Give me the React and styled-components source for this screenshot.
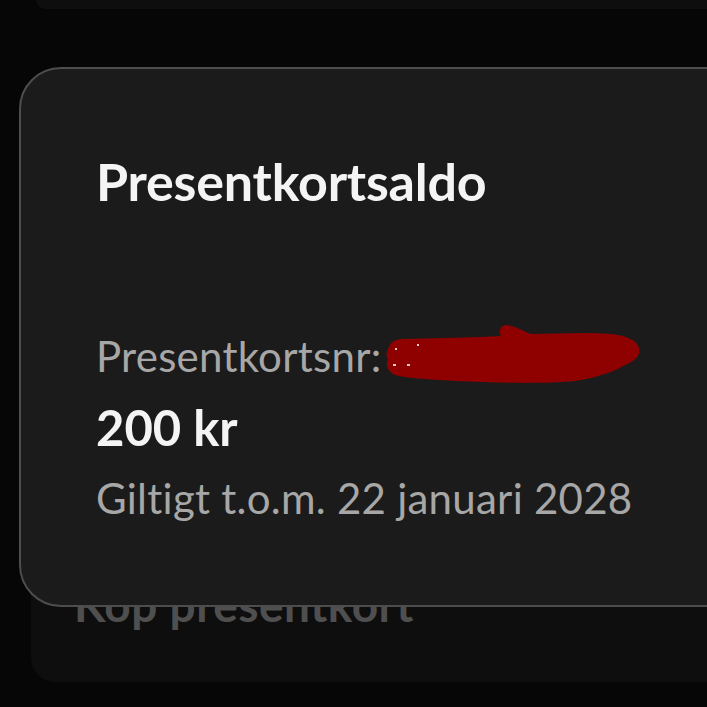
import React from "react";
import styled, { createGlobalStyle } from "styled-components";

const Global = createGlobalStyle`
  html, body {
    margin: 0;
    padding: 0;
    background: #060606;
    overflow: hidden;
  }
  * { box-sizing: border-box; }
`;

const Page = styled.div`
  width: 707px;
  height: 707px;
  overflow: hidden;
  display: flex;
  flex-direction: column;
  font-family: Lato, "Noto Sans", sans-serif;
`;

const TopCard = styled.div`
  flex: none;
  height: 9px;
  margin-left: 36px;
  margin-right: -40px;
  background: #0e0e0e;
  border-radius: 0 0 0 26px;
`;

const MainCard = styled.section`
  flex: none;
  position: relative;
  z-index: 1;
  height: 540px;
  margin-top: 58px;
  margin-left: 19px;
  margin-right: -60px;
  padding: 86px 0 0 75px;
  background: #1b1b1b;
  border: 2px solid #4d4d4d;
  border-radius: 42px;
  display: flex;
  flex-direction: column;
  align-items: flex-start;
`;

const Title = styled.h1`
  margin: 0;
  font-size: 52px;
  line-height: 52px;
  font-weight: 700;
  color: #f4f4f4;
  letter-spacing: -0.2px;
`;

const Line = styled.div`
  position: relative;
  margin-top: ${(p) => p.$gap}px;
  font-size: ${(p) => (p.$big ? 49 : 42)}px;
  line-height: ${(p) => (p.$big ? 49 : 42)}px;
  font-weight: ${(p) => (p.$big ? 700 : 400)};
  color: ${(p) => (p.$big ? "#f4f4f4" : "#a7a7a7")};
  letter-spacing: ${(p) => (p.$big ? 0 : 0.25)}px;
  white-space: nowrap;
`;

const Redaction = styled.svg`
  position: absolute;
  left: 289px;
  top: -12px;
  width: 255px;
  height: 60px;
  overflow: visible;
`;

const BottomCard = styled.div`
  flex: none;
  height: 115px;
  margin-top: -40px;
  margin-left: 31px;
  margin-right: -40px;
  padding: 15px 0 0 43px;
  background: #0e0e0e;
  border-radius: 24px;
`;

const BuyLabel = styled.div`
  font-size: 46px;
  line-height: 46px;
  font-weight: 700;
  color: #4f4f4f;
  letter-spacing: 0.5px;
  white-space: nowrap;
`;

export default function App() {
  return (
    <>
      <Global />
      <Page>
        <TopCard />
        <MainCard>
          <Title>Presentkortsaldo</Title>
          <Line $gap={128}>
            Presentkortsnr:
            <Redaction viewBox="0 0 255 60">
              <path
                fill="#8f0000"
                d="M4,24 C6,18 12,16 18,16 L60,15 C85,14 105,14 116,13 C113,7 116,2 122,2 C130,3 138,8 146,11 C170,11 200,9 225,11 C240,12 252,17 254,25 C256,32 250,38 240,42 C230,48 215,54 190,58 C160,61 110,60 70,58 C40,56 20,55 10,52 C3,49 0,42 3,36 C0,32 2,28 4,24 Z"
              />
              <rect x="8" y="41" width="3" height="2" fill="#e8c8c8" />
              <rect x="22" y="41" width="3" height="2" fill="#e8c8c8" />
              <rect x="10" y="25" width="2" height="2" fill="#e8c8c8" />
              <rect x="32" y="21" width="2" height="2" fill="#e8c8c8" />
            </Redaction>
          </Line>
          <Line $big $gap={26}>200 kr</Line>
          <Line $gap={25}>Giltigt t.o.m. 22 januari 2028</Line>
        </MainCard>
        <BottomCard>
          <BuyLabel>Köp presentkort</BuyLabel>
        </BottomCard>
      </Page>
    </>
  );
}
